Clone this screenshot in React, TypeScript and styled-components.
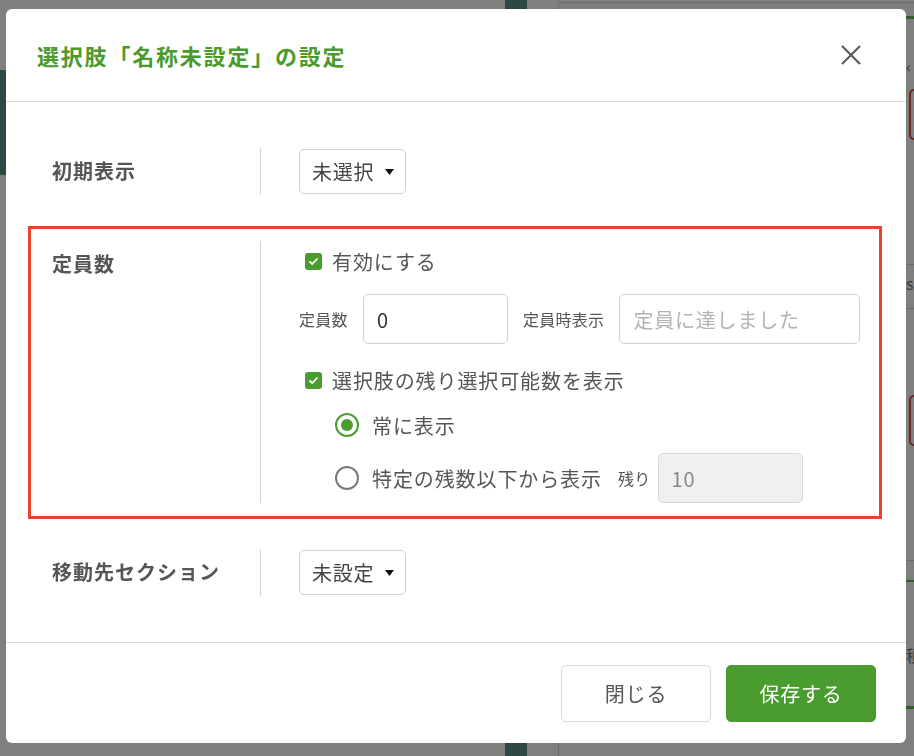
import React from "react";
import styled, { createGlobalStyle } from "styled-components";

const GlobalStyle = createGlobalStyle`
  html, body {
    margin: 0;
    padding: 0;
    height: 100%;
  }
  body {
    background: #7f7f7f;
    font-family: "Noto Sans CJK JP", "Noto Sans", sans-serif;
    color: #555;
    overflow: hidden;
  }
  * {
    box-sizing: border-box;
  }
`;

/* ---------- dimmed page behind the modal ---------- */

const Backdrop = styled.div`
  display: flex;
  height: 756px;
`;

const LeftPane = styled.div`
  flex-shrink: 0;
  width: 505px;
  padding-top: 70px;
`;

const SideBlock = styled.div`
  width: 6px;
  height: 105px;
  background: #304845;
`;

const DarkColumn = styled.div`
  flex-shrink: 0;
  width: 22px;
  background: #2f4744;
`;

const RightPanel = styled.div`
  flex: 1;
  min-width: 0;
  margin-left: 31px;
  margin-top: 2px;
  border-left: 1px solid #6c6c6c;
  border-top: 1px solid #6c6c6c;
  padding-left: 347px;
  display: flex;
  flex-direction: column;
  overflow: hidden;
`;

const PanelRule = styled.div<{ $top: number; $color?: string; $h?: number }>`
  margin-top: ${(p) => p.$top}px;
  height: ${(p) => p.$h ?? 1}px;
  background: ${(p) => p.$color ?? "#6c6c6c"};
`;

const PanelButton = styled.div<{ $top: number }>`
  margin-top: ${(p) => p.$top}px;
  margin-left: 3px;
  height: 51px;
  border: 2px solid #6a2a24;
  border-right: none;
  border-radius: 6px 0 0 6px;
`;

const PanelText = styled.div<{ $top: number }>`
  margin-top: ${(p) => p.$top}px;
  font-size: 16px;
  line-height: 18px;
  color: #3a3a3a;
  white-space: nowrap;
`;

/* ---------- modal ---------- */

const Overlay = styled.div`
  position: fixed;
  inset: 0;
  padding: 9px 0 0 6px;
`;

const Modal = styled.div`
  width: 900px;
  height: 734px;
  background: #fff;
  border-radius: 6px;
  display: flex;
  flex-direction: column;
`;

const Header = styled.div`
  height: 93px;
  flex-shrink: 0;
  display: flex;
  align-items: center;
  justify-content: space-between;
  padding: 0 44px 0 31px;
  border-bottom: 1px solid #dcdcdc;
`;

const Title = styled.h1`
  margin: 0;
  font-size: 22px;
  letter-spacing: 1.8px;
  font-weight: 700;
  color: #4b9a2e;
`;

const CloseButton = styled.button`
  border: none;
  background: none;
  padding: 0;
  width: 22px;
  height: 22px;
  display: flex;
  align-items: center;
  justify-content: center;
  cursor: pointer;
`;

const Body = styled.div`
  flex: 1;
  padding: 31px 24px 0 22px;
  display: flex;
  flex-direction: column;
  gap: 15px;
`;

const Row = styled.div<{ $highlight?: boolean }>`
  display: grid;
  grid-template-columns: 229px 1px 1fr;
  padding: 12px 0 13px;
  border: 3px solid ${(p) => (p.$highlight ? "#e8432b" : "transparent")};
`;

const RowLabel = styled.div`
  padding-left: 21px;
  font-size: 20px;
  letter-spacing: 1px;
  font-weight: 700;
  line-height: 46px;
  color: #555;
`;

const Divider = styled.div`
  background: #d4d4d4;
`;

const RowContent = styled.div`
  padding-left: 38px;
  min-height: 47px;
  display: flex;
  flex-direction: column;
  justify-content: center;
`;

const SelectBox = styled.button`
  align-self: flex-start;
  height: 45px;
  width: 107px;
  padding: 0 0 0 12px;
  display: flex;
  align-items: center;
  gap: 11px;
  background: #fff;
  border: 1px solid #cfcfcf;
  border-radius: 5px;
  font-family: inherit;
  font-size: 20px;
  letter-spacing: 0.8px;
  color: #444;
`;

const Caret = () => (
  <svg width="9" height="6" viewBox="0 0 9 6">
    <path d="M0 0 L9 0 L4.5 6 Z" fill="#111" />
  </svg>
);

const CheckLine = styled.label<{ $top: number }>`
  margin-top: ${(p) => p.$top}px;
  height: 40px;
  display: flex;
  align-items: center;
  gap: 10px;
  padding-left: 6px;
  font-size: 20px;
  letter-spacing: 0.9px;
  color: #555;
`;

const CheckBox = styled.span`
  width: 17px;
  height: 17px;
  border-radius: 3px;
  background: #4a9c2f;
  display: flex;
  align-items: center;
  justify-content: center;
`;

const CheckMark = () => (
  <svg width="11" height="9" viewBox="0 0 11 9">
    <path d="M1.5 4.5 L4.2 7 L9.5 1.5" stroke="#fff" strokeWidth="1.8" fill="none" />
  </svg>
);

const RadioLine = styled.label<{ $top: number; $h: number }>`
  margin-top: ${(p) => p.$top}px;
  height: ${(p) => p.$h}px;
  display: flex;
  align-items: center;
  padding-left: 36px;
  font-size: 20px;
  letter-spacing: 0.9px;
  color: #555;
`;

const Radio = styled.span<{ $checked?: boolean }>`
  width: 24px;
  height: 24px;
  border-radius: 50%;
  border: 2px solid ${(p) => (p.$checked ? "#4a9c2f" : "#7a7a7a")};
  display: flex;
  align-items: center;
  justify-content: center;
  margin-right: 13px;

  &::after {
    content: "";
    width: 12px;
    height: 12px;
    border-radius: 50%;
    background: ${(p) => (p.$checked ? "#4a9c2f" : "transparent")};
  }
`;

const FieldRow = styled.div`
  margin-top: 13px;
  display: flex;
  align-items: center;
`;

const SmallLabel = styled.span<{ $gapL?: number; $gapR?: number }>`
  font-size: 16px;
  letter-spacing: 0.3px;
  color: #555;
  margin-left: ${(p) => p.$gapL ?? 0}px;
  margin-right: ${(p) => p.$gapR ?? 15}px;
  white-space: nowrap;
`;

const TextInput = styled.input<{ $w: number }>`
  width: ${(p) => p.$w}px;
  height: 50px;
  border: 1px solid #cfcfcf;
  border-radius: 5px;
  padding: 0 13px;
  font-family: inherit;
  font-size: 20px;
  letter-spacing: 0.8px;
  color: #333;
  background: #fff;
  outline: none;

  &::placeholder {
    color: #b3b3b3;
  }

  &:disabled {
    background: #f0f0f2;
    border-color: #d8d8d8;
    color: #8a8a8a;
  }
`;

const Footer = styled.div`
  height: 101px;
  flex-shrink: 0;
  border-top: 1px solid #dcdcdc;
  display: flex;
  justify-content: flex-end;
  gap: 15px;
  padding: 22px 30px 0 0;
`;

const Button = styled.button<{ $primary?: boolean }>`
  width: 150px;
  height: 57px;
  border-radius: 5px;
  font-family: inherit;
  font-size: 20px;
  letter-spacing: 0.8px;
  cursor: pointer;
  border: 1px solid ${(p) => (p.$primary ? "#4a9c2f" : "#d9d9d9")};
  background: ${(p) => (p.$primary ? "#4a9c2f" : "#fff")};
  color: ${(p) => (p.$primary ? "#fff" : "#555")};
`;

const App = () => {
  return (
    <>
      <GlobalStyle />
      <Backdrop>
        <LeftPane>
          <SideBlock />
        </LeftPane>
        <DarkColumn />
        <RightPanel>
          <PanelRule $top={13} $h={3} $color="#2f5f22" />
          <PanelText $top={38}>‹</PanelText>
          <PanelButton $top={14} />
          <PanelRule $top={124} />
          <PanelText $top={9}>s</PanelText>
          <PanelRule $top={16} />
          <PanelButton $top={86} />
          <PanelRule $top={114} />
          <PanelRule $top={19} $h={2} $color="#2f5f22" />
          <PanelText $top={64}>積</PanelText>
          <PanelRule $top={42} $h={3} $color="#2f5f22" />
        </RightPanel>
      </Backdrop>

      <Overlay>
        <Modal>
          <Header>
            <Title>選択肢「名称未設定」の設定</Title>
            <CloseButton aria-label="閉じる">
              <svg width="22" height="22" viewBox="0 0 22 22">
                <path d="M2 2 L20 20 M20 2 L2 20" stroke="#555" strokeWidth="2" />
              </svg>
            </CloseButton>
          </Header>

          <Body>
            <Row>
              <RowLabel>初期表示</RowLabel>
              <Divider />
              <RowContent>
                <SelectBox>
                  未選択
                  <Caret />
                </SelectBox>
              </RowContent>
            </Row>

            <Row $highlight>
              <RowLabel>定員数</RowLabel>
              <Divider />
              <RowContent>
                <CheckLine $top={0}>
                  <CheckBox>
                    <CheckMark />
                  </CheckBox>
                  有効にする
                </CheckLine>
                <FieldRow>
                  <SmallLabel>定員数</SmallLabel>
                  <TextInput $w={145} defaultValue="0" />
                  <SmallLabel $gapL={15}>定員時表示</SmallLabel>
                  <TextInput $w={241} placeholder="定員に達しました" />
                </FieldRow>
                <CheckLine $top={16}>
                  <CheckBox>
                    <CheckMark />
                  </CheckBox>
                  選択肢の残り選択可能数を表示
                </CheckLine>
                <RadioLine $top={5} $h={40}>
                  <Radio $checked />
                  常に表示
                </RadioLine>
                <RadioLine $top={8} $h={50}>
                  <Radio />
                  特定の残数以下から表示
                  <SmallLabel $gapL={16} $gapR={7}>
                    残り
                  </SmallLabel>
                  <TextInput $w={145} defaultValue="10" disabled />
                </RadioLine>
              </RowContent>
            </Row>

            <Row>
              <RowLabel>移動先セクション</RowLabel>
              <Divider />
              <RowContent>
                <SelectBox>
                  未設定
                  <Caret />
                </SelectBox>
              </RowContent>
            </Row>
          </Body>

          <Footer>
            <Button>閉じる</Button>
            <Button $primary>保存する</Button>
          </Footer>
        </Modal>
      </Overlay>
    </>
  );
};

export default App;
